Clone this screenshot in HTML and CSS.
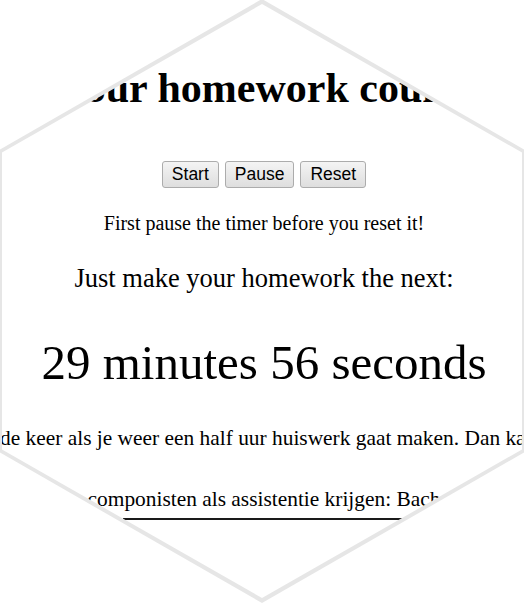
FILE: index.html
```html
<!DOCTYPE html>
<html lang="en">
<head>
<meta charset="utf-8">
<title>Your homework counter</title>
<link rel="stylesheet" href="styles.css">
</head>
<body>
<div class="hex">
  <main class="hex-inner">
    <h1 class="title">Your homework counter</h1>
    <div class="controls">
      <button class="btn" type="button">Start</button>
      <button class="btn" type="button">Pause</button>
      <button class="btn" type="button">Reset</button>
    </div>
    <p class="note">First pause the timer before you reset it!</p>
    <p class="lead">Just make your homework the next:</p>
    <p class="timer">29 minutes 56 seconds</p>
    <p class="story line-one">volgende keer als je weer een half uur huiswerk gaat maken. Dan kan jij nu</p>
    <p class="story line-two">componisten als assistentie krijgen: Bach</p>
    <div class="rule"></div>
  </main>
</div>
</body>
</html>
```
FILE: styles.css
```css
html, body {
  margin: 0;
  padding: 0;
  background: #ffffff;
  overflow: hidden;
  width: 524px;
  height: 603px;
}

.hex {
  margin: -1px -1px 0 -1px;
  height: 604px;
  padding: 5px 3px;
  box-sizing: border-box;
  background: #e6e6e6;
  clip-path: polygon(50% 0, 100% 25%, 100% 75%, 50% 100%, 0 75%, 0 25%);
}

.hex-inner {
  height: 100%;
  background: #ffffff;
  clip-path: polygon(50% 0, 100% 25%, 100% 75%, 50% 100%, 0 75%, 0 25%);
  overflow: hidden;
  display: flex;
  flex-direction: column;
  align-items: center;
  padding-top: 63px;
  padding-left: 4px;
  box-sizing: border-box;
  font-family: "Liberation Serif", "Times New Roman", serif;
  color: #000;
}

.hex-inner > * {
  flex: none;
  white-space: nowrap;
  margin: 0;
}

.title {
  font-size: 42px;
  line-height: 42px;
  font-weight: bold;
  padding-left: 28px;
}

.controls {
  display: flex;
  gap: 6px;
  margin-top: 52px !important;
}

.btn {
  font-family: "Liberation Sans", Arial, sans-serif;
  font-size: 17.5px;
  line-height: 19px;
  padding: 3px 9px;
  border: 1px solid #acacac;
  border-radius: 3px;
  background: linear-gradient(#f4f4f4, #dedede);
  color: #000;
  margin: 0;
}

.note {
  font-size: 20px;
  line-height: 20px;
  margin-top: 25px !important;
}

.lead {
  font-size: 26.5px;
  line-height: 27px;
  margin-top: 32px !important;
}

.timer {
  font-size: 49px;
  line-height: 50px;
  margin-top: 46px !important;
}

.story {
  font-size: 21.4px;
  line-height: 21px;
}

.line-one {
  margin-top: 40px !important;
}

.line-two {
  margin-top: 40px !important;
}

.rule {
  width: 282px;
  height: 2px;
  background: #1a1a1a;
  margin-top: 8px !important;
}
```
